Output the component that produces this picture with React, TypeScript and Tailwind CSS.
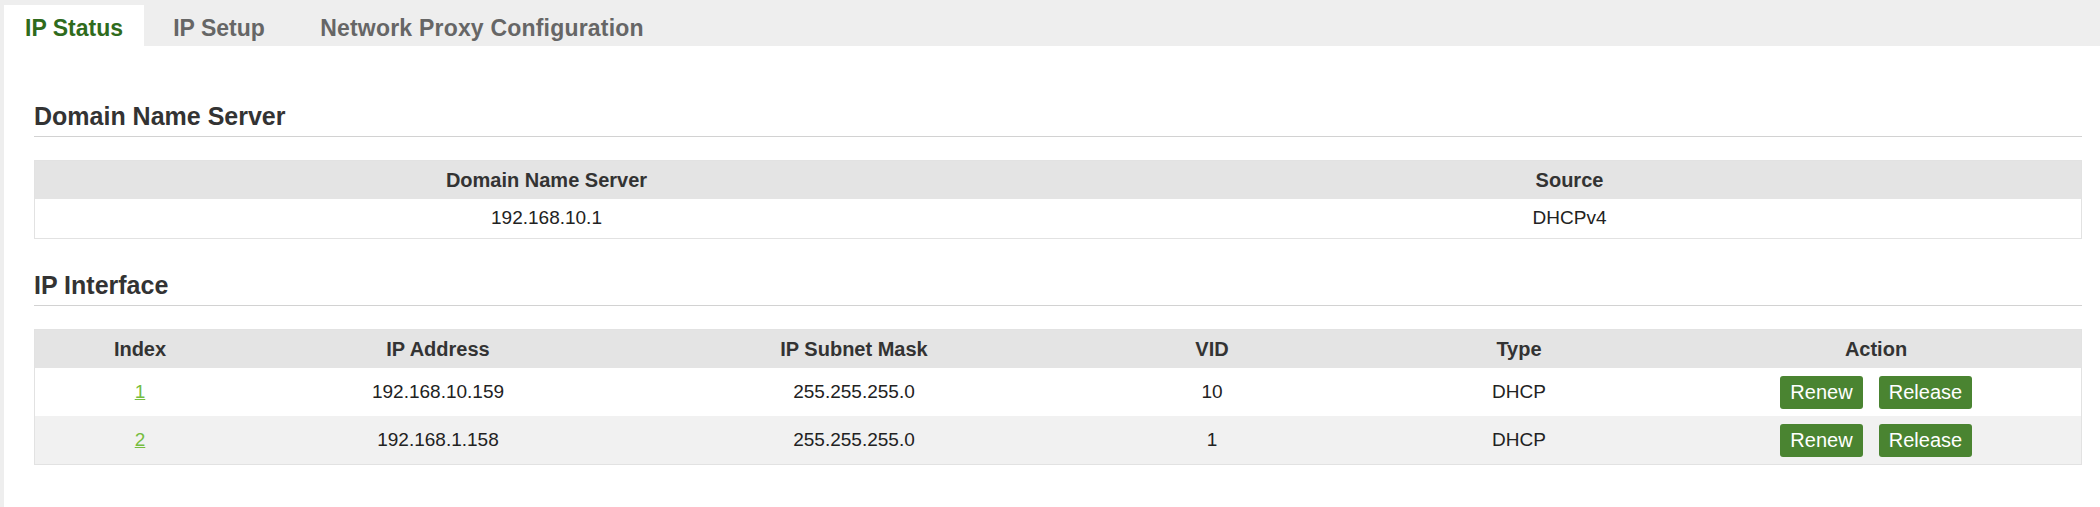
const tabs = [
  { label: "IP Status", w: "w-[140px]", active: true },
  { label: "IP Setup", w: "w-[150px]", active: false },
  { label: "Network Proxy Configuration", w: "w-[376px]", active: false },
]

const dns = [{ server: "192.168.10.1", source: "DHCPv4" }]

const ifaces = [
  { index: "1", ip: "192.168.10.159", mask: "255.255.255.0", vid: "10", type: "DHCP" },
  { index: "2", ip: "192.168.1.158", mask: "255.255.255.0", vid: "1", type: "DHCP" },
]

const ifaceCols = "grid grid-cols-[210px_386px_446px_270px_344px_1fr]"

function SectionTitle({ children, className = "" }: { children: React.ReactNode; className?: string }) {
  return (
    <h2 className={`border-b border-[#d2d2d2] pb-[5px] text-[25px] font-bold leading-[30px] text-[#333] ${className}`}>
      {children}
    </h2>
  )
}

function Btn({ children, w }: { children: React.ReactNode; w: string }) {
  return (
    <button className={`flex h-[33px] ${w} items-center justify-center rounded-[3px] bg-[#4a8431] text-[20px] text-white`}>
      {children}
    </button>
  )
}

export default function App() {
  return (
    <div className="min-h-[507px] bg-[#eeeeee] pl-[4px] font-['Liberation_Sans',Arial,sans-serif]">
      <div className="flex h-[46px] items-end">
        {tabs.map((t) => (
          <div
            key={t.label}
            className={`flex h-[41px] ${t.w} items-center justify-center pt-[6px] text-[23px] font-bold ${
              t.active ? "bg-white text-[#2f6b1c]" : "text-[#666]"
            } ${t.label.length > 20 ? "tracking-[0.2px]" : ""}`}
          >
            {t.label}
          </div>
        ))}
      </div>

      <div className="min-h-[461px] bg-white pl-[30px] pr-[18px]">
        <SectionTitle className="pt-[55px]">Domain Name Server</SectionTitle>

        <div className="mt-[23px] border border-[#e2e2e2] text-[19px]">
          <div className="grid h-[38px] grid-cols-2 items-center bg-[#e4e4e4] text-center text-[20px] font-bold text-[#333]">
            <div>Domain Name Server</div>
            <div>Source</div>
          </div>
          {dns.map((d) => (
            <div key={d.server} className="grid h-[39px] grid-cols-2 items-center text-center text-[#222]">
              <div>{d.server}</div>
              <div>{d.source}</div>
            </div>
          ))}
        </div>

        <SectionTitle className="pt-[31px]">IP Interface</SectionTitle>

        <div className="mt-[23px] border border-[#e2e2e2] text-[19px]">
          <div className={`${ifaceCols} h-[38px] items-center bg-[#e4e4e4] text-center text-[20px] font-bold text-[#333]`}>
            <div>Index</div>
            <div>IP Address</div>
            <div>IP Subnet Mask</div>
            <div>VID</div>
            <div>Type</div>
            <div className="pr-[20px]">Action</div>
          </div>
          {ifaces.map((r, i) => (
            <div
              key={r.index}
              className={`${ifaceCols} h-[48px] items-center text-center text-[#222] ${i % 2 ? "bg-[#f1f1f1]" : "bg-white"}`}
            >
              <div>
                <a href="#" className="text-[#76bd3f] underline">{r.index}</a>
              </div>
              <div>{r.ip}</div>
              <div>{r.mask}</div>
              <div>{r.vid}</div>
              <div>{r.type}</div>
              <div className="flex justify-center gap-[16px] pr-[20px]">
                <Btn w="w-[83px]">Renew</Btn>
                <Btn w="w-[93px]">Release</Btn>
              </div>
            </div>
          ))}
        </div>
      </div>
    </div>
  )
}
